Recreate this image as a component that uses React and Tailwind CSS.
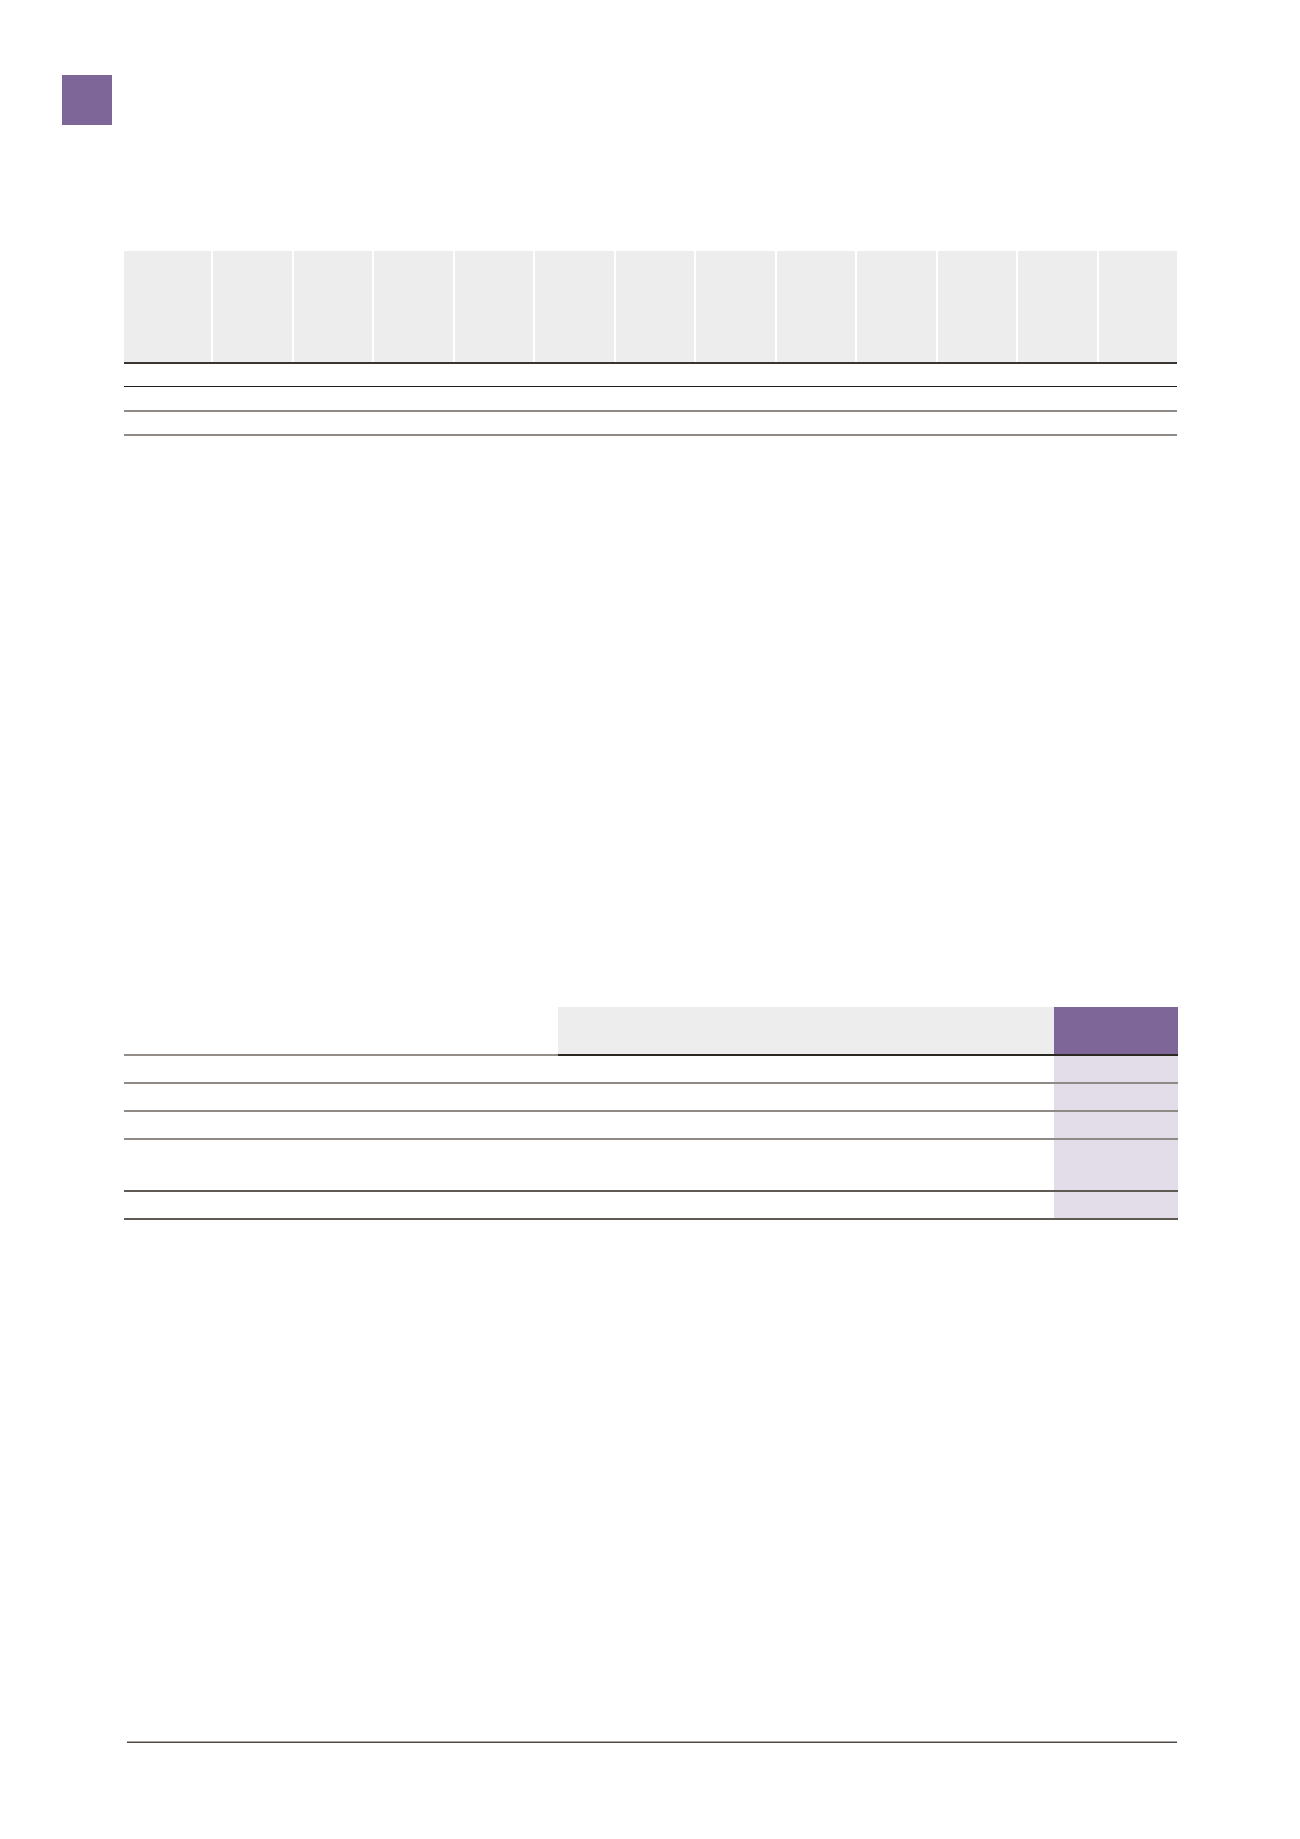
import React from "react";

const topCols = Array.from({ length: 12 });
const bottomRows = [
    { h: "h-[26px]", line: "border-[#8f8a86]" },
    { h: "h-[26px]", line: "border-[#8f8a86]" },
    { h: "h-[26px]", line: "border-[#8f8a86]" },
    { h: "h-[50px]", line: "border-[#5f5a54]" },
    { h: "h-[26px]", line: "border-[#5f5a54]" },
];

const App = () => {
    return (
        <div className="w-[1300px] min-h-[1839px] bg-white pt-[75px] font-['Liberation_Sans',sans-serif]">
            {/* section marker */}
            <div className="ml-[62px] w-[50px] h-[50px] bg-[#7e6699]" />

            {/* first table */}
            <div className="ml-[124px] mt-[126px] w-[1053px]">
                <div className="grid grid-cols-[87px_repeat(12,1fr)] h-[113px] border-b-2 border-[#3a3530]">
                    <div className="bg-[#ededed]" />
                    {topCols.map((_, i) => (
                        <div key={i} className="bg-[#ededed] border-l-2 border-white" />
                    ))}
                </div>
                <div className="h-[23px] border-b border-[#1e1e1e]" />
                <div className="h-[25px] border-b-2 border-[#8f8a86]" />
                <div className="h-[24px] border-b-2 border-[#8f8a86]" />
            </div>

            {/* second table */}
            <div className="ml-[124px] mt-[571px] w-[1054px]">
                <div className="grid grid-cols-[434px_repeat(5,124px)] h-[49px]">
                    <div className="border-b-2 border-[#928d88]" />
                    <div className="bg-[#ededed] border-b-2 border-[#2b2721]" />
                    <div className="bg-[#ededed] border-b-2 border-[#2b2721]" />
                    <div className="bg-[#ededed] border-b-2 border-[#2b2721]" />
                    <div className="bg-[#ededed] border-b-2 border-[#2b2721]" />
                    <div className="bg-[#7e6699] border-b-2 border-[#2b2721]" />
                </div>
                {bottomRows.map((row, i) => (
                    <div key={i} className={`grid grid-cols-[434px_repeat(5,124px)] border-b-2 ${row.line}`}>
                        <div className={row.h} />
                        <div />
                        <div />
                        <div />
                        <div />
                        <div className="bg-[#e2dde9]" />
                    </div>
                ))}
            </div>

            {/* footer rule */}
            <div className="ml-[127px] mt-[521px] w-[1050px] border-t border-[#aaa6a1] border-b border-b-[#4d4843]" />
        </div>
    );
};

export default App;
